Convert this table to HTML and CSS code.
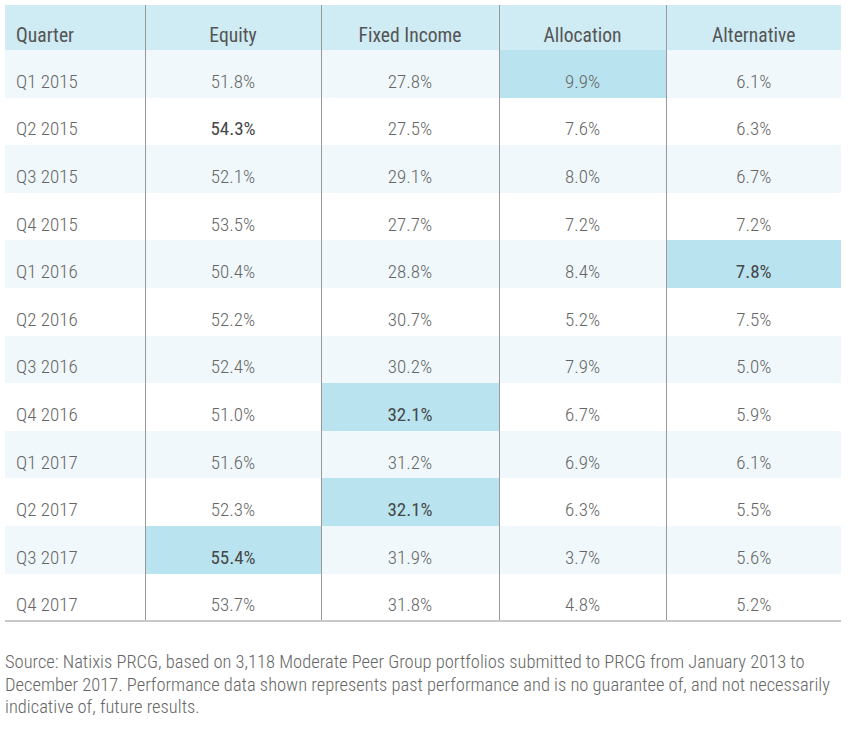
FILE: index.html
```html
<!DOCTYPE html>
<html>
<head>
<meta charset="utf-8">
<link rel="stylesheet" href="styles.css">
</head>
<body>
<div class="page">
<table class="data">
<colgroup>
<col class="c-q"><col class="c-e"><col class="c-f"><col class="c-a"><col class="c-alt">
</colgroup>
<thead>
<tr><th class="first">Quarter</th><th>Equity</th><th>Fixed Income</th><th>Allocation</th><th>Alternative</th></tr>
</thead>
<tbody>
<tr class="alt"><td class="first">Q1 2015</td><td>51.8%</td><td>27.8%</td><td class="hl">9.9%</td><td>6.1%</td></tr>
<tr><td class="first">Q2 2015</td><td class="b">54.3%</td><td>27.5%</td><td>7.6%</td><td>6.3%</td></tr>
<tr class="alt"><td class="first">Q3 2015</td><td>52.1%</td><td>29.1%</td><td>8.0%</td><td>6.7%</td></tr>
<tr><td class="first">Q4 2015</td><td>53.5%</td><td>27.7%</td><td>7.2%</td><td>7.2%</td></tr>
<tr class="alt"><td class="first">Q1 2016</td><td>50.4%</td><td>28.8%</td><td>8.4%</td><td class="hl b">7.8%</td></tr>
<tr><td class="first">Q2 2016</td><td>52.2%</td><td>30.7%</td><td>5.2%</td><td>7.5%</td></tr>
<tr class="alt"><td class="first">Q3 2016</td><td>52.4%</td><td>30.2%</td><td>7.9%</td><td>5.0%</td></tr>
<tr><td class="first">Q4 2016</td><td>51.0%</td><td class="hl b">32.1%</td><td>6.7%</td><td>5.9%</td></tr>
<tr class="alt"><td class="first">Q1 2017</td><td>51.6%</td><td>31.2%</td><td>6.9%</td><td>6.1%</td></tr>
<tr><td class="first">Q2 2017</td><td>52.3%</td><td class="hl b">32.1%</td><td>6.3%</td><td>5.5%</td></tr>
<tr class="alt"><td class="first">Q3 2017</td><td class="hl b">55.4%</td><td>31.9%</td><td>3.7%</td><td>5.6%</td></tr>
<tr><td class="first">Q4 2017</td><td>53.7%</td><td>31.8%</td><td>4.8%</td><td>5.2%</td></tr>
</tbody>
</table>
<p class="note">Source: Natixis PRCG, based on 3,118 Moderate Peer Group portfolios submitted to PRCG from January 2013 to December 2017. Performance data shown represents past performance and is no guarantee of, and not necessarily indicative of, future results.</p>
</div>
</body>
</html>
```
FILE: styles.css
```css
html, body {
  margin: 0;
  padding: 0;
  background: #ffffff;
}
.page {
  padding: 5px;
  width: 836px;
  font-family: "Roboto Condensed", "Liberation Sans Narrow", Roboto, sans-serif;
  font-stretch: 80%;
  font-weight: 300;
  color: #666;
}
.data {
  width: 836px;
  border-collapse: collapse;
  table-layout: fixed;
  border-bottom: 2px solid #c8c8c8;
}
.c-q { width: 140px; }
.c-e { width: 176px; }
.c-f { width: 178px; }
.c-a { width: 167px; }
.c-alt { width: 175px; }
th, td {
  text-align: center;
  padding: 16px 0 0 0;
  border-left: 1px solid #999;
  font-size: 19px;
  line-height: 22px;
  vertical-align: middle;
}
th.first, td.first {
  text-align: left;
  padding-left: 11px;
  border-left: none;
}
thead tr {
  height: 45px;
  background: #cfebf3;
}
th {
  font-weight: 400;
  color: #555;
  font-size: 19.6px;
}
tbody tr {
  height: 47.6px;
}
tbody tr.alt {
  background: #f0f8fb;
}
td.hl {
  background: #b9e3ee;
}
td.b {
  font-weight: 400;
  color: #474747;
}
.note {
  margin: 29px 0 0 0;
  font-size: 18.5px;
  line-height: 22.5px;
  color: #666;
}
```
